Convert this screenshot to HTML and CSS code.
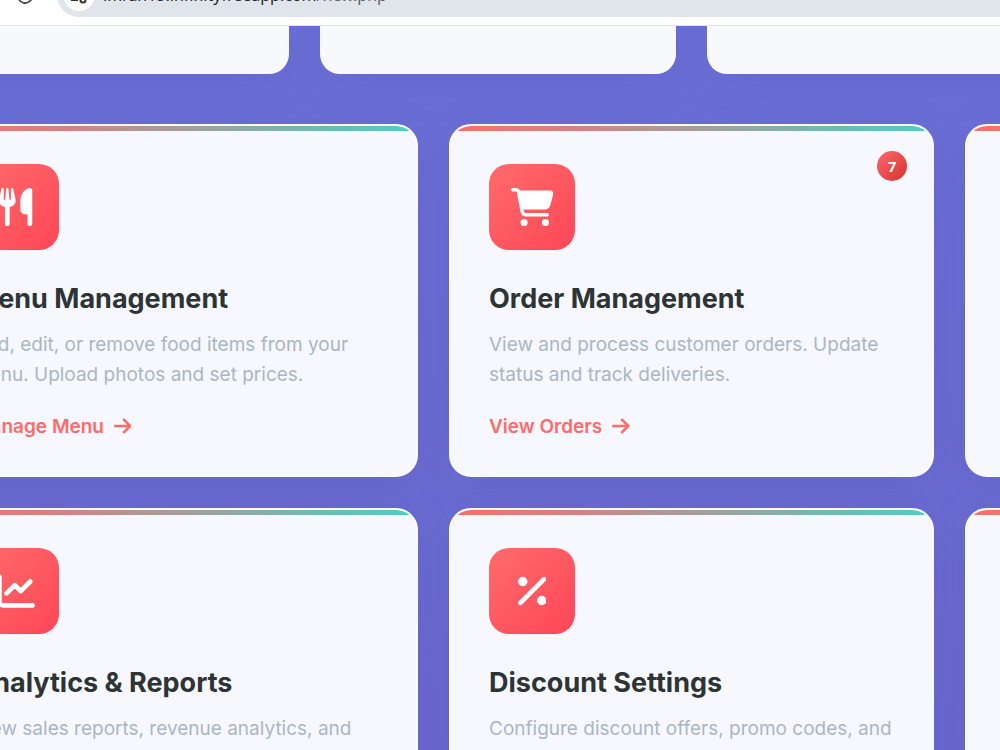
FILE: index.html
```html
<!DOCTYPE html>
<html lang="en">
<head>
  <meta charset="UTF-8" />
  <title>Admin Dashboard</title>
  <meta name="viewport" content="width=device-width, initial-scale=1.0" />
  <link rel="stylesheet" href="styles.css">
</head>
<body>
  <header class="toolbar">
    <button class="reload" aria-label="Reload">
      <svg viewBox="0 0 20 20"><path d="M16 5.5A8 8 0 1 0 18 10M17.5 1v5.5H12" /></svg>
    </button>
    <div class="address">
      <span class="site-info">
        <svg viewBox="0 0 18 18"><path d="M9 4H17M1 14H8" /><circle cx="4" cy="4" r="2" /><circle cx="13" cy="14" r="2.5" /></svg>
      </span>
      <span class="url">imran15.infinityfreeapp.com<span class="path">/new.php</span></span>
    </div>
  </header>

  <main class="dashboard">
    <section class="stats">
      <div class="stat-card"></div>
      <div class="stat-card"></div>
      <div class="stat-card"></div>
      <div class="stat-card"></div>
    </section>

    <section class="cards">
      <article class="card">
        <div class="card-icon">
          <svg viewBox="0 0 448 512"><path d="M416 0C400 0 288 32 288 176V288c0 35.3 28.7 64 64 64h32V480c0 17.7 14.3 32 32 32s32-14.3 32-32V352 240 32c0-17.7-14.3-32-32-32zM64 16C64 7.8 57.9 1 49.7 .1S34.2 4.6 32.4 12.5L2.1 148.8C.7 155.1 0 161.5 0 167.9c0 45.9 35.1 83.6 80 87.7V480c0 17.7 14.3 32 32 32s32-14.3 32-32V255.6c44.9-4.1 80-41.8 80-87.7c0-6.4-.7-12.8-2.1-19.1L191.6 12.5c-1.8-8-9.3-13.3-17.4-12.4S160 7.8 160 16V150.2c0 5.4-4.4 9.8-9.8 9.8c-5.1 0-9.3-3.9-9.8-9L127.9 14.6C127.2 6.3 120.3 0 112 0s-15.2 6.3-15.9 14.6L83.7 151c-.5 5.1-4.7 9-9.8 9c-5.4 0-9.8-4.4-9.8-9.8V16z" /></svg>
        </div>
        <h3>Menu Management</h3>
        <p>Add, edit, or remove food items from your menu. Upload photos and set prices.</p>
        <a href="#menu">Manage Menu
          <svg viewBox="0 0 448 512"><path d="M438.6 278.6c12.5-12.5 12.5-32.8 0-45.3l-160-160c-12.5-12.5-32.8-12.5-45.3 0s-12.5 32.8 0 45.3L338.8 224 32 224c-17.7 0-32 14.3-32 32s14.3 32 32 32l306.7 0L233.4 393.4c-12.5 12.5-12.5 32.8 0 45.3s32.8 12.5 45.3 0l160-160z" /></svg>
        </a>
      </article>

      <article class="card">
        <span class="badge">7</span>
        <div class="card-icon">
          <svg viewBox="0 0 576 512"><path d="M0 24C0 10.7 10.7 0 24 0H69.5c22 0 41.5 12.8 50.6 32h411c26.3 0 45.5 25 38.6 50.4l-41 152.3c-8.5 31.4-37 53.3-69.5 53.3H170.7l5.4 28.5c2.2 11.3 12.1 19.5 23.6 19.5H488c13.3 0 24 10.7 24 24s-10.7 24-24 24H199.7c-34.6 0-64.3-24.6-70.7-58.5L77.4 54.5c-.7-3.8-4-6.5-7.9-6.5H24C10.7 48 0 37.3 0 24zM128 464a48 48 0 1 1 96 0 48 48 0 1 1 -96 0zm336-48a48 48 0 1 1 0 96 48 48 0 1 1 0-96z" /></svg>
        </div>
        <h3>Order Management</h3>
        <p>View and process customer orders. Update status and track deliveries.</p>
        <a href="#orders">View Orders
          <svg viewBox="0 0 448 512"><path d="M438.6 278.6c12.5-12.5 12.5-32.8 0-45.3l-160-160c-12.5-12.5-32.8-12.5-45.3 0s-12.5 32.8 0 45.3L338.8 224 32 224c-17.7 0-32 14.3-32 32s14.3 32 32 32l306.7 0L233.4 393.4c-12.5 12.5-12.5 32.8 0 45.3s32.8 12.5 45.3 0l160-160z" /></svg>
        </a>
      </article>

      <article class="card"></article>

      <article class="card">
        <div class="card-icon">
          <svg viewBox="0 0 512 512"><path d="M64 64c0-17.7-14.3-32-32-32S0 46.3 0 64V400c0 44.2 35.8 80 80 80H480c17.7 0 32-14.3 32-32s-14.3-32-32-32H80c-8.8 0-16-7.2-16-16V64zm406.6 86.6c12.5-12.5 12.5-32.8 0-45.3s-32.8-12.5-45.3 0L320 210.7l-57.4-57.4c-12.5-12.5-32.8-12.5-45.3 0l-112 112c-12.5 12.5-12.5 32.8 0 45.3s32.8 12.5 45.3 0L240 221.3l57.4 57.4c12.5 12.5 32.8 12.5 45.3 0l128-128z" /></svg>
        </div>
        <h3>Analytics &amp; Reports</h3>
        <p>View sales reports, revenue analytics, and</p>
      </article>

      <article class="card">
        <div class="card-icon">
          <svg viewBox="0 0 384 512"><path d="M374.6 118.6c12.5-12.5 12.5-32.8 0-45.3s-32.8-12.5-45.3 0l-320 320c-12.5 12.5-12.5 32.8 0 45.3s32.8 12.5 45.3 0l320-320zM128 128A64 64 0 1 0 0 128a64 64 0 1 0 128 0zM384 384a64 64 0 1 0 -128 0 64 64 0 1 0 128 0z" /></svg>
        </div>
        <h3>Discount Settings</h3>
        <p>Configure discount offers, promo codes, and</p>
      </article>

      <article class="card"></article>
    </section>
  </main>
</body>
</html>
```
FILE: styles.css
```css
* {
  box-sizing: border-box;
  margin: 0;
  padding: 0;
}
html {
  height: 100%;
  overflow: hidden;
}
body {
  height: 100%;
  overflow: hidden;
  font-family: Inter, sans-serif;
  background: linear-gradient(to bottom, #6a70d6, #6b69d0);
}

/* browser toolbar */
.toolbar {
  position: relative;
  z-index: 1;
  display: flex;
  align-items: flex-end;
  height: 26px;
  padding: 0 0 8px 16px;
  background: #fff;
  border-bottom: 1px solid #e6e6e6;
}
.reload {
  display: flex;
  align-items: center;
  flex: none;
  width: 41px;
  height: 44px;
  border: none;
  background: none;
}
.reload svg {
  width: 18px;
  height: 18px;
  fill: none;
  stroke: #474747;
  stroke-width: 2;
}
.address {
  display: flex;
  align-items: center;
  flex: 1;
  gap: 8px;
  height: 44px;
  padding-left: 6px;
  margin-right: -40px;
  border-radius: 22px;
  background: #e0e5ec;
}
.site-info {
  display: flex;
  align-items: center;
  justify-content: center;
  width: 32px;
  height: 32px;
  border-radius: 50%;
  background: #fff;
}
.site-info svg {
  width: 18px;
  height: 18px;
  fill: none;
  stroke: #333;
  stroke-width: 2;
}
.url {
  font-family: "Noto Sans", sans-serif;
  font-size: 16px;
  color: #24272b;
}
.path {
  color: #5c6066;
}

/* dashboard runs past both sides of the window */
.dashboard {
  margin: 0 -450px 0 -67px;
}
.stats {
  display: grid;
  grid-template-columns: repeat(4, 1fr);
  gap: 31px;
  margin-bottom: 50px;
}
.stat-card {
  height: 48px;
  border-radius: 0 0 20px 20px;
  background: #f8f9fd;
  box-shadow: 0 10px 40px rgba(80, 70, 170, 0.15);
}
.cards {
  display: grid;
  grid-template-columns: repeat(3, 1fr);
  gap: 31px;
}
.card {
  position: relative;
  overflow: hidden;
  padding: 38px 38px 36px;
  border: 2px solid #fafbff;
  border-radius: 22px;
  background: #f7f8fd;
  box-shadow: 0 10px 40px rgba(80, 70, 170, 0.15);
}
.card::before {
  content: "";
  position: absolute;
  top: 0;
  left: 0;
  right: 0;
  height: 5px;
  background: linear-gradient(90deg, #ff6b6b, #4ecdc4);
}
.card-icon {
  display: flex;
  align-items: center;
  justify-content: center;
  width: 86px;
  height: 86px;
  margin-bottom: 32px;
  border-radius: 20px;
  background: linear-gradient(135deg, #ff6b6b, #ff4757);
}
.card-icon svg {
  height: 38px;
  fill: #fff;
}
.card h3 {
  margin-bottom: 14px;
  font-size: 27px;
  font-weight: 700;
  line-height: 34px;
  color: #2d3436;
}
.card p {
  min-height: 60px;
  margin-bottom: 25px;
  font-size: 19px;
  line-height: 30px;
  color: #a9b6c6;
}
.card a {
  display: flex;
  align-items: center;
  gap: 10px;
  width: fit-content;
  font-size: 19px;
  font-weight: 600;
  line-height: 24px;
  color: #ff6b6b;
  text-decoration: none;
}
.card a svg {
  height: 20px;
  margin-bottom: 2px;
  fill: #ff6b6b;
}
.badge {
  position: absolute;
  top: 25px;
  right: 25px;
  width: 30px;
  height: 30px;
  border-radius: 50%;
  background: linear-gradient(135deg, #ff6b6b, #d63031);
  color: #fff;
  font-family: "Open Sans", sans-serif;
  font-size: 15px;
  font-weight: 700;
  line-height: 30px;
  text-align: center;
}
```
